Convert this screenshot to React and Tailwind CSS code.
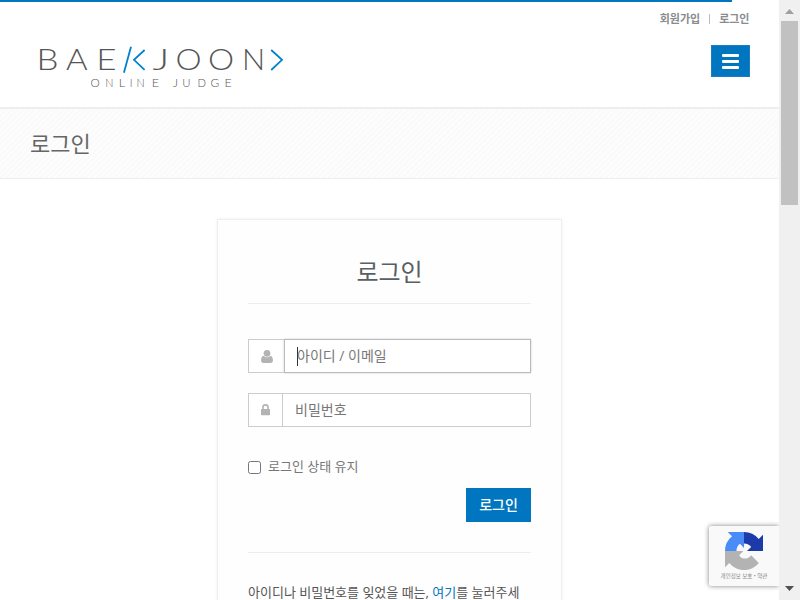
import React from "react";

// Each letter: character, left origin, horizontal stretch.
const TITLE = [
  ["B", 36.5, 1.16], ["A", 66, 1.1], ["E", 96.3, 1.17], ["J", 152.4, 1.35],
  ["O", 175.4, 1.1], ["O", 208.1, 1.1], ["N", 242, 1.02],
];
const SUBTITLE = [
  ["O", 90.4, 1.08], ["N", 105.2, 1], ["L", 118.8, 1.15], ["I", 129.7, 1], ["N", 136.4, 1], ["E", 151.7, 1.15],
  ["J", 172.8, 1.2], ["U", 182.2, 1.05], ["D", 197.4, 1.03], ["G", 210.6, 1.1], ["E", 224.5, 1.15],
];

function Logo() {
  return (
    <svg className="block h-[60px] w-[260px]" viewBox="30 40 260 60" aria-label="Baekjoon Online Judge">
      <g fontFamily="Lato, sans-serif" fontWeight="300" fontSize="30" fill="#555">
        {TITLE.map(([c, x, s]) => <text key={x} transform={`translate(${x} 70.3) scale(${s} 1)`}>{c}</text>)}
      </g>
      <g fontFamily="Lato, sans-serif" fontWeight="300" fontSize="10.8" fill="#555">
        {SUBTITLE.map(([c, x, s]) => <text key={x} transform={`translate(${x} 87.4) scale(${s} 1)`}>{c}</text>)}
      </g>
      <g fill="none" stroke="#0082ce" strokeWidth="1.8">
        <path d="M123.9 72.8 131 46.8" />
        <path d="M144.6 50 134 59.8 144.6 69.8" />
        <path d="M271.2 50 282 59.8 271.2 70" />
      </g>
    </svg>
  );
}

function UserIcon() {
  return (
    <svg className="h-[13px] w-[12px]" viewBox="0 0 11 12" fill="#b3b3b3">
      <circle cx="5.5" cy="3.1" r="3.1" />
      <path d="M2.4 5.2C.7 5.4 0 7.100 0 9.700 0 11.100.9 12 2.200 12h6.600C10.100 12 11 11.100 11 9.700 11 7.100 10.300 5.400 8.600 5.200 7.700 6.300 6.700 6.700 5.500 6.700S3.300 6.300 2.400 5.200Z" />
    </svg>
  );
}

function LockIcon() {
  return (
    <svg className="h-[12px] w-[9px]" viewBox="0 0 9 12">
      <path d="M1.900 6V3.500a2.600 2.600 0 0 1 5.200 0V6" fill="none" stroke="#b3b3b3" strokeWidth="1.600" />
      <rect y="5" width="9" height="6.200" rx=".6" fill="#b3b3b3" />
    </svg>
  );
}

function RecaptchaLogo() {
  return (
    <svg className="h-[38px] w-[38px]" viewBox="0 0 64 64">
      <path fill="#1c3aa9" d="M64 32V4.600l-7.200 7.200A32 32 0 0 0 32 0v19.300c5.500 0 9.500 2.400 12.100 5.900L37 32Z" />
      <path fill="#4a8cf7" d="M32 0H4.600l7.200 7.200A32 32 0 0 0 0 32h19.300c0-5.500 2.400-9.500 5.900-12.100L32 27Z" />
      <path fill="#b3b3b3" d="M0 32v27.400l7.200-7.200A32 32 0 0 0 57 52.200L44.100 39.100a14 14 0 0 1-12 5.600c-3.200-.1-6-1.800-8.200-5.600l7.100-7.100Z" />
    </svg>
  );
}

function Scrollbar() {
  return (
    <div className="flex h-full w-[21px] shrink-0 flex-col items-center bg-[#f0f0f0]">
      <div className="flex h-[21px] w-full items-center justify-center pt-[2px]">
        <svg className="h-[5px] w-[9px]" viewBox="0 0 9 5"><path d="M0 5 4.500 0 9 5Z" fill="#a0a0a0" /></svg>
      </div>
      <div className="h-[184px] w-[17px] bg-[#c1c1c1]" />
      <div className="mt-auto flex h-[21px] w-full items-center justify-center pb-[3px]">
        <svg className="h-[5px] w-[9px]" viewBox="0 0 9 5"><path d="M0 0 4.500 5 9 0Z" fill="#505050" /></svg>
      </div>
    </div>
  );
}

export default function App() {
  return (
    <div className="relative flex h-[600px] w-[800px] overflow-hidden bg-white font-['Open_Sans','Noto_Sans_CJK_KR',sans-serif] text-[13px] text-[#333]">
      <div className="h-full min-w-0 flex-1 overflow-hidden">
        <header className="h-[109px] border-b-2 border-[#eee]">
          <div className="h-[2px] w-[732px] bg-[#0076c0]" />
          <nav className="flex h-[34px] items-center justify-end pr-[29.500px] text-[11px] font-bold text-[#888c8e]">
            <a>회원가입</a>
            <span className="mr-[9px] ml-[9px] h-[10px] w-px bg-[#bbb]" />
            <a>로그인</a>
          </nav>
          <div className="flex items-start justify-between pr-[29px] pl-[30px]">
            <div className="mt-[4px]"><Logo /></div>
            <button className="mt-[9px] flex h-[32px] w-[39px] flex-col items-center justify-center gap-[3px] border border-[#1a7ec0] bg-[#0076c0]">
              <span className="h-[3px] w-[17px] rounded-[1px] bg-white" />
              <span className="h-[3px] w-[17px] rounded-[1px] bg-white" />
              <span className="h-[3px] w-[17px] rounded-[1px] bg-white" />
            </button>
          </div>
        </header>

        <section className="flex h-[70px] items-center border-b border-[#eee] bg-[repeating-linear-gradient(135deg,#fafafa_0px,#fafafa_2px,#fdfdfd_2px,#fdfdfd_4px)] pb-px pl-[30px]">
          <h1 className="text-[22px] leading-[22px] text-[#666]">로그인</h1>
        </section>

        <form className="mx-auto mt-[40px] h-[420px] w-[345px] border border-[#eee] bg-[#fefefe] px-[30px] shadow-[0_0_3px_#eee]">
          <h2 className="flex h-[84px] items-end justify-center border-b border-[#eee] pb-[12px] text-[24px] leading-[38px] text-[#5a5f64]">로그인</h2>
          <div className="mt-[35px] flex h-[34px]">
            <span className="flex w-[36px] items-center justify-center border border-r-0 border-[#ccc] bg-white"><UserIcon /></span>
            <div className="flex flex-1 items-center border border-[#bbb] bg-white pl-[12px] shadow-[0_0_2px_#ccc]">
              <span className="h-[19px] w-px bg-[#333]" />
              <span className="-ml-px pb-[2px] text-[14px] text-[#777]">아이디 / 이메일</span>
            </div>
          </div>
          <div className="mt-[20px] flex h-[34px]">
            <span className="flex w-[34px] items-center justify-center border border-r-0 border-[#ccc] bg-white"><LockIcon /></span>
            <div className="flex flex-1 items-center border border-[#ccc] bg-white pb-[2px] pl-[12px] text-[14px] text-[#777]">비밀번호</div>
          </div>
          <label className="mt-[30px] flex h-[20px] items-center gap-[7px] text-[13px] text-[#777]">
            <span className="h-[13px] w-[13px] rounded-[2.500px] border border-[#767676] bg-white" />
            <span>로그인 상태 유지</span>
          </label>
          <div className="mt-[11px] flex justify-end">
            <button className="h-[34px] w-[65px] bg-[#0076c0] text-[14px] leading-[34px] font-medium text-white">로그인</button>
          </div>
          <div className="mt-[30px] border-t border-[#eee]" />
          <p className="mt-[32px] text-[13px] leading-[14px] whitespace-nowrap text-[#555]">
            아이디나 비밀번호를 잊었을 때는, <a className="text-[#0076c0]">여기</a>를 눌러주세
          </p>
        </form>
      </div>
      <div className="absolute top-[526px] left-[709px] flex h-[60px] w-[70px] flex-col items-center rounded-l-[2px] bg-[#f9f9f9] pt-[6px] shadow-[0_0_5px_#808080]">
        <RecaptchaLogo />
        <span className="mt-[2px] text-[5.500px] leading-[9px] whitespace-nowrap text-[#888]">개인정보 보호 • 약관</span>
      </div>
      <div className="relative h-full shrink-0"><Scrollbar /></div>
    </div>
  );
}
